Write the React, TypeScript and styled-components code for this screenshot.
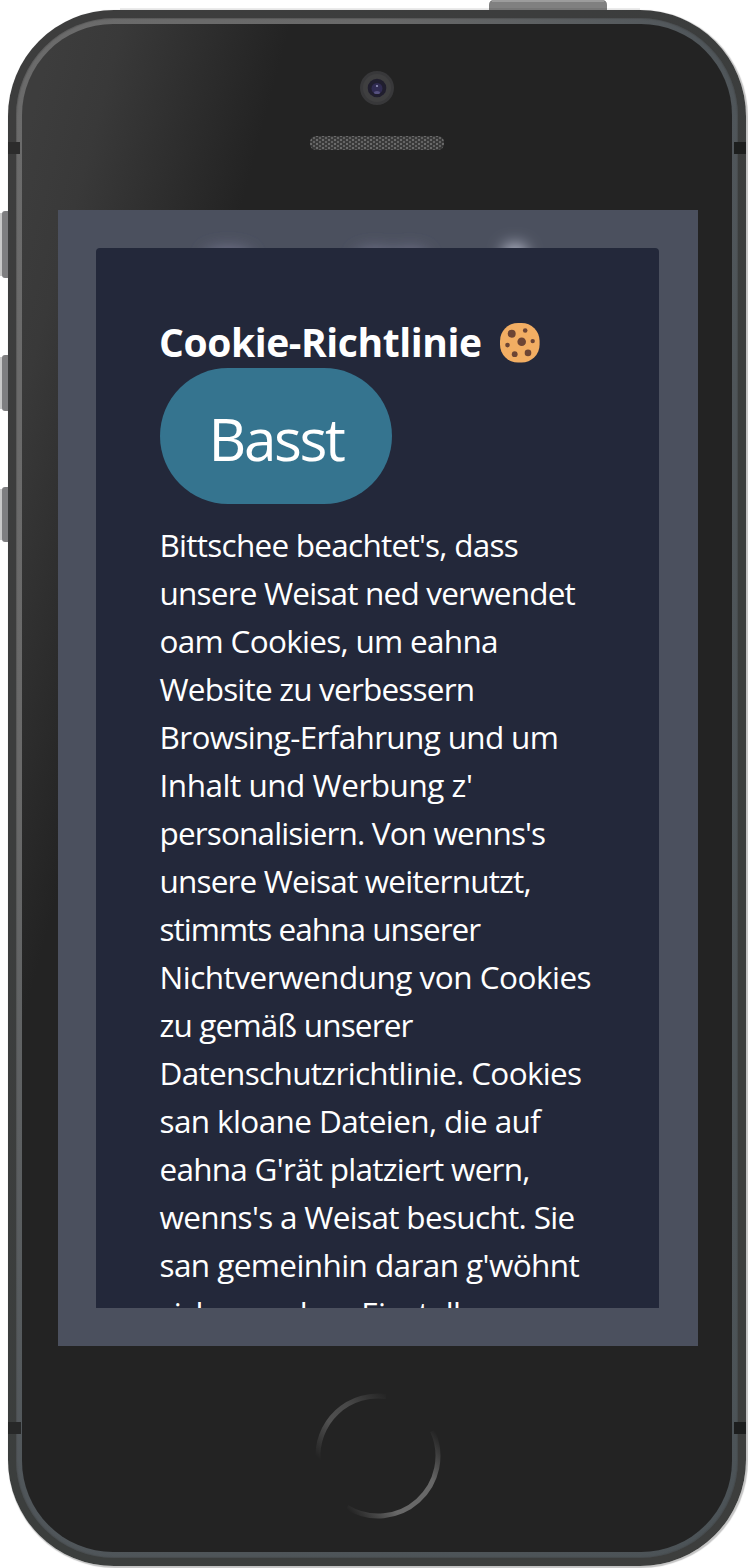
import React from "react";
import styled, { createGlobalStyle } from "styled-components";

const GlobalStyle = createGlobalStyle`
  * { box-sizing: border-box; }
  body { margin: 0; background: #fff; overflow: hidden; }
`;

const Stage = styled.main`
  position: relative;
  width: 748px;
  height: 1568px;
  padding: 10px 2px 2px 8px;
  overflow: hidden;
  font-family: "Open Sans", "Noto Sans", sans-serif;
`;

const Frame = styled.div`
  position: relative;
  width: 738px;
  height: 1556px;
  padding: 8px;
  border-radius: 106px;
  background: linear-gradient(125deg, #3d3d3d 0%, #3c3d3d 30%, #3b3e3d 60%, #3d3e3d 100%);
  box-shadow: 1px 1px 1px 1px #c4c4c4;
`;

const Rim = styled.div`
  height: 100%;
  padding: 6px;
  border-radius: 98px;
  background: linear-gradient(115deg, #6b6b6b 0%, #696969 25%, #50565a 48%, #4c5357 100%);
  box-shadow: inset 0 0 1px 1px rgba(60, 60, 60, 0.35);
`;

const Face = styled.div`
  display: flex;
  flex-direction: column;
  align-items: center;
  height: 100%;
  padding: 46px 0 32px;
  border-radius: 91px;
  background: linear-gradient(105deg, #3d3d3d 3%, #393939 9%, #232323 24%);
`;

const Sensors = styled.header`
  display: flex;
  flex: none;
  flex-direction: column;
  align-items: center;
  gap: 29px;
  height: 140px;
`;

/* Buttons and antenna seams drawn over the metal edge of the phone. */
const Hardware = styled.svg`
  position: absolute;
  inset: 0;
  width: 748px;
  height: 1568px;
  pointer-events: none;
`;

const Camera = styled.svg`
  width: 36px;
  height: 36px;
`;

const Speaker = styled.svg`
  width: 134px;
  height: 16px;
`;

const Screen = styled.section`
  position: relative;
  flex: none;
  width: 640px;
  height: 1136px;
  margin-left: 2px;
  padding: 38px 39px 38px 38px;
  background: #4b505e;
  overflow: hidden;
`;

const Glow = styled.svg`
  position: absolute;
  inset: 0;
  width: 640px;
  height: 60px;
`;

const Dialog = styled.article`
  position: relative;
  height: 1060px;
  padding: 64px 60px 0 64px;
  border-radius: 4px 4px 0 0;
  background: #23283a;
  color: #fff;
  overflow: hidden;
`;

const Title = styled.h1`
  display: flex;
  align-items: center;
  height: 56px;
  margin: 0;
  font-size: 39px;
  font-weight: 700;
  line-height: 56px;
  white-space: nowrap;
  letter-spacing: -0.4px;
`;

const TitleText = styled.span`
  width: 340px;
  margin-left: -1px;
  padding-top: 4px;
`;

const CookieIcon = styled.svg`
  width: 42px;
  height: 42px;
  margin-top: 6px;
`;

const AcceptButton = styled.button`
  display: block;
  width: 232px;
  height: 136px;
  padding: 6px 0 0;
  border: 0;
  border-radius: 68px;
  background: #35748f;
  color: #fff;
  font: 400 58.5px/1.5 "Open Sans", "Noto Sans", sans-serif;
  letter-spacing: -2.4px;
`;

const Copy = styled.p`
  margin: 17px 0 0 -0.5px;
  font-size: 31.5px;
  line-height: 48px;
`;

const Line = styled.span<{ $spacing: number }>`
  display: block;
  white-space: nowrap;
  letter-spacing: ${(p) => p.$spacing}px;
`;

const HomeButton = styled.svg`
  width: 128px;
  height: 128px;
  margin: auto 0 0 2px;
`;

const lines: [string, number][] = [
  ["Bittschee beachtet's, dass", -0.74],
  ["unsere Weisat ned verwendet", -0.8],
  ["oam Cookies, um eahna", -0.7],
  ["Website zu verbessern", -0.8],
  ["Browsing-Erfahrung und um", -0.66],
  ["Inhalt und Werbung z'", -0.48],
  ["personalisiern. Von wenns's", -0.85],
  ["unsere Weisat weiternutzt,", -0.82],
  ["stimmts eahna unserer", -0.98],
  ["Nichtverwendung von Cookies", -0.51],
  ["zu gemäß unserer", -0.82],
  ["Datenschutzrichtlinie. Cookies", -0.67],
  ["san kloane Dateien, die auf", -0.61],
  ["eahna G'rät platziert wern,", -0.74],
  ["wenns's a Weisat besucht. Sie", -0.67],
  ["san gemeinhin daran g'wöhnt", -0.59],
  ["sich manchen Einstellungen", -0.72],
];

const chips = [
  [12, 11, 4], [25.5, 7.8, 2.3], [22, 19, 4.3], [33, 18.4, 2.2],
  [7.8, 22.4, 2.3], [15, 31.5, 2.9], [28.3, 30.2, 3.3],
];

const sideButtons = [[211, 67], [355, 56], [487, 55]];

export default function App() {
  return (
    <>
      <GlobalStyle />
      <Stage>
        <Frame>
          <Rim>
            <Face>
              <Sensors>
                <Camera viewBox="0 0 36 36">
                  <circle cx="18" cy="18" r="17" fill="#38383a" />
                  <circle cx="18" cy="18" r="14" fill="#3f3f40" />
                  <circle cx="18" cy="18" r="9.3" fill="#201e2e" />
                  <circle cx="18" cy="18.5" r="5.5" fill="#302b52" />
                  <ellipse cx="18" cy="22.5" rx="3" ry="1.6" fill="#56517f" />
                  <circle cx="18" cy="16" r="1.1" fill="#9696bb" />
                </Camera>
                <Speaker viewBox="0 0 134 16">
                  <defs>
                    <pattern id="mesh" width="6" height="4" patternUnits="userSpaceOnUse">
                      <rect width="6" height="4" fill="#3a3a3a" />
                      <rect x="0" y="0" width="2" height="2" fill="#6a6a6a" />
                      <rect x="3" y="2" width="2" height="2" fill="#626262" />
                    </pattern>
                  </defs>
                  <rect y="1" width="134" height="14" rx="6" fill="url(#mesh)" />
                </Speaker>
              </Sensors>
              <Screen>
                <Glow viewBox="0 0 640 60">
                  <defs>
                    <filter id="soft" x="-100%" y="-200%" width="300%" height="500%">
                      <feGaussianBlur stdDeviation="8" />
                    </filter>
                  </defs>
                  <g filter="url(#soft)">
                    <ellipse cx="170" cy="47" rx="24" ry="9" fill="#74768f" />
                    <ellipse cx="317" cy="47" rx="20" ry="8" fill="#74768f" />
                    <ellipse cx="352" cy="47" rx="18" ry="8" fill="#74768f" />
                    <ellipse cx="457" cy="44" rx="12" ry="10" fill="#c6c9da" />
                  </g>
                </Glow>
                <Dialog>
                  <Title>
                    <TitleText>Cookie-Richtlinie</TitleText>
                    <CookieIcon viewBox="0 0 42 42">
                      <rect x="1" y="1" width="39.6" height="39.6" rx="18" fill="#f2ae63" />
                      {chips.map(([x, y, r]) => (
                        <circle key={`${x}-${y}`} cx={x + 0.7} cy={y + 0.7} r={r} fill="#6d4534" />
                      ))}
                    </CookieIcon>
                  </Title>
                  <AcceptButton>Basst</AcceptButton>
                  <Copy>
                    {lines.map(([text, spacing]) => (
                      <Line key={text} $spacing={spacing}>{text}</Line>
                    ))}
                  </Copy>
                </Dialog>
              </Screen>
              <HomeButton viewBox="0 0 128 128">
                <defs>
                  <linearGradient id="arcTop" gradientUnits="userSpaceOnUse" x1="2" y1="76" x2="76" y2="2">
                    <stop offset="0.08" stopColor="#505050" stopOpacity="0" />
                    <stop offset="0.4" stopColor="#505050" />
                    <stop offset="0.65" stopColor="#484848" />
                    <stop offset="0.98" stopColor="#484848" stopOpacity="0" />
                  </linearGradient>
                  <linearGradient id="arcBottom" gradientUnits="userSpaceOnUse" x1="32" y1="116" x2="120" y2="38">
                    <stop offset="0" stopColor="#686868" stopOpacity="0" />
                    <stop offset="0.3" stopColor="#686868" />
                    <stop offset="0.7" stopColor="#686868" />
                    <stop offset="1" stopColor="#686868" stopOpacity="0" />
                  </linearGradient>
                </defs>
                <path d="M4.1 68 A60 60 0 0 1 72 4.5" fill="none" stroke="url(#arcTop)" strokeWidth="5" />
                <path d="M33 115.4 A60 60 0 0 0 118.5 39" fill="none" stroke="url(#arcBottom)" strokeWidth="5" />
              </HomeButton>
            </Face>
          </Rim>
        </Frame>
        <Hardware viewBox="0 0 748 1568">
          <path d="M489 10 V5 Q489 0 494 0 H602 Q607 0 607 5 V10 Z" fill="#808080" />
          <path d="M492 0 H604 V2 H492 Z" fill="#9c9c9c" />
          {sideButtons.map(([y, h]) => (
            <g key={y}>
              <rect x="0" y={y + 2} width="2" height={h - 4} fill="#c8c8c8" />
              <path d={`M8 ${y} H5 Q2 ${y} 2 ${y + 3} V${y + h - 3} Q2 ${y + h} 5 ${y + h} H8 Z`} fill="#7e7e80" />
            </g>
          ))}
          <rect x="8" y="142" width="12" height="12" fill="#2c2c2c" />
          <rect x="734" y="142" width="12" height="12" fill="#1d1f1e" />
          <rect x="8" y="1422" width="13" height="12" fill="#272828" />
          <rect x="734" y="1422" width="12" height="12" fill="#1d1e1e" />
          <rect x="120" y="8" width="520" height="2" fill="#000" opacity="0.08" />
        </Hardware>
      </Stage>
    </>
  );
}
